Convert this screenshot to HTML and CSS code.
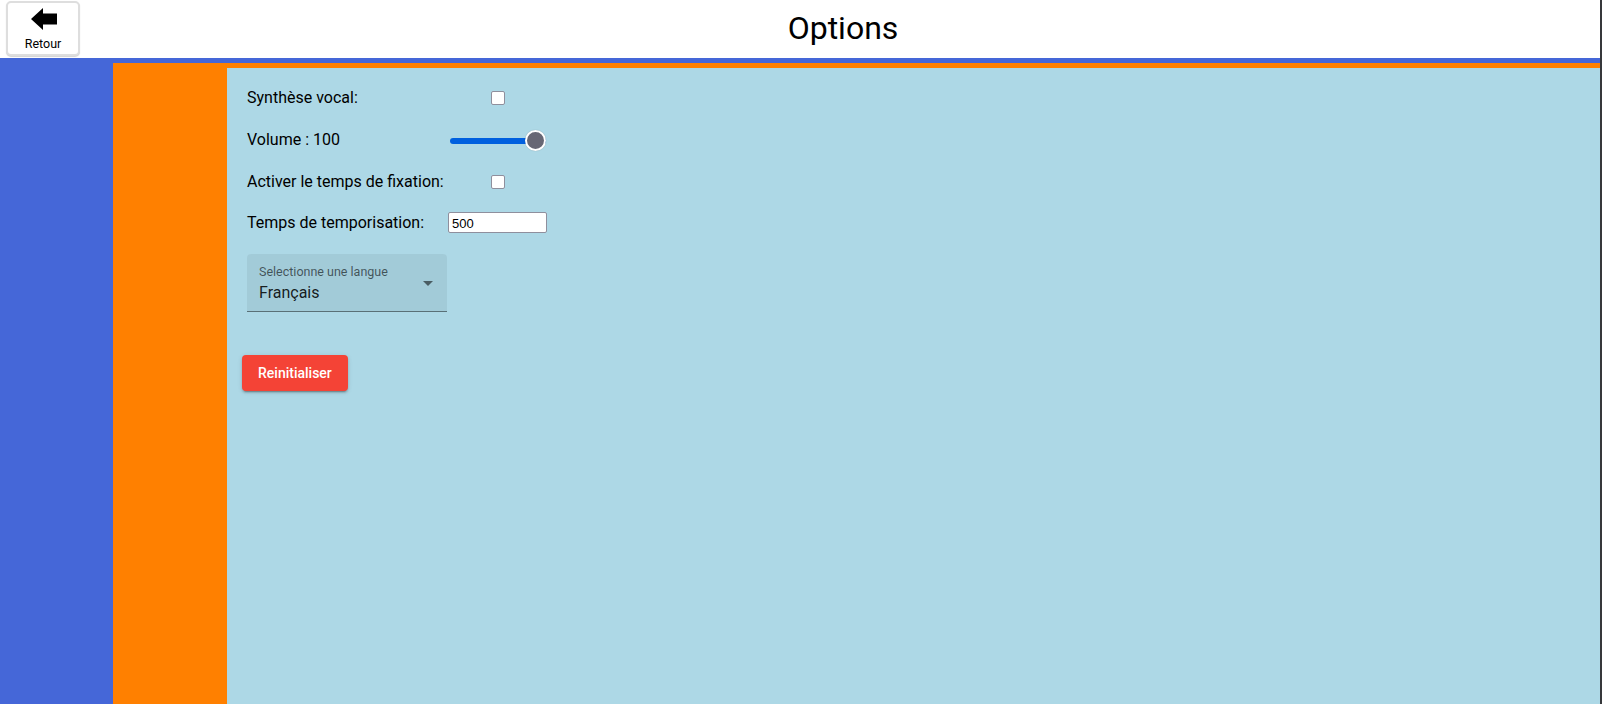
FILE: index.html
```html
<!DOCTYPE html>
<html lang="fr">
<head>
<meta charset="utf-8">
<title>Options</title>
<link rel="stylesheet" href="styles.css">
</head>
<body>
<div class="app">
  <header class="topbar">
    <button class="back-btn" type="button">
      <svg class="back-icon" width="26" height="22" viewBox="0 0 26 22" aria-hidden="true">
        <path d="M0 11 L12 0 V5.5 H26 V16.5 H12 V22 Z" fill="#000"/>
      </svg>
      <span class="back-label">Retour</span>
    </button>
    <h1 class="title">Options</h1>
  </header>
  <main class="outer">
    <div class="middle">
      <section class="content">
        <div class="settings">
          <label class="setting-label" for="tts">Synthèse vocal:</label>
          <div class="setting-control"><input id="tts" class="checkbox" type="checkbox"></div>

          <label class="setting-label" for="vol">Volume : 100</label>
          <div class="setting-control"><input id="vol" class="range" type="range" min="0" max="100" value="100"></div>

          <label class="setting-label" for="fix">Activer le temps de fixation:</label>
          <div class="setting-control"><input id="fix" class="checkbox" type="checkbox"></div>

          <label class="setting-label" for="delay">Temps de temporisation:</label>
          <div class="setting-control"><input id="delay" class="text-input" type="text" value="500"></div>
        </div>

        <div class="select-field">
          <span class="select-label">Selectionne une langue</span>
          <span class="select-value">Français</span>
          <svg class="select-arrow" width="24" height="24" viewBox="0 0 24 24" aria-hidden="true">
            <path d="M7 10l5 5 5-5z" fill="rgba(0,0,0,0.54)"/>
          </svg>
        </div>

        <button class="reset-btn" type="button">Reinitialiser</button>
      </section>
    </div>
  </main>
</div>
</body>
</html>
```

FILE: styles.css
```css
* { box-sizing: border-box; }

html, body {
  margin: 0;
  padding: 0;
  height: 100%;
}

body {
  font-family: Roboto, "Liberation Sans", Arial, sans-serif;
  background: #ffffff;
  border-right: 2px solid #36383b;
  overflow: hidden;
}

.app {
  display: flex;
  flex-direction: column;
  height: 100%;
}

.topbar {
  height: 58px;
  display: flex;
  align-items: flex-start;
  background: #ffffff;
  flex: none;
}

.back-btn {
  margin: 1px 0 0 6px;
  width: 74px;
  height: 55px;
  padding: 0;
  background: #ffffff;
  border: 2px solid #dedede;
  border-radius: 5px;
  box-shadow: 0 1px 1px rgba(0,0,0,0.18);
  display: flex;
  flex-direction: column;
  align-items: center;
  cursor: pointer;
}

.back-icon {
  display: block;
  margin-top: 5px;
  margin-left: 1px;
}

.back-label {
  margin-top: 7px;
  font-family: Roboto, "Liberation Sans", Arial, sans-serif;
  font-size: 12.5px;
  line-height: 14px;
  color: #000;
}

.title {
  flex: 1;
  margin: 0;
  text-align: center;
  font-size: 32px;
  font-weight: 400;
  line-height: 37px;
  padding: 10px 0 0 6px;
  color: #000;
}

.outer {
  flex: 1;
  background: #4567d8;
  padding: 5px 0 0 113px;
  display: flex;
  min-height: 0;
}

.middle {
  flex: 1;
  background: #ff8000;
  padding: 5px 0 0 114px;
  display: flex;
}

.content {
  flex: 1;
  background: #add8e6;
  padding: 8px 0 0 15px;
  display: flex;
  flex-direction: column;
  align-items: flex-start;
}

.settings {
  display: grid;
  grid-template-columns: 201px 99px;
  grid-template-rows: 42px 42px 42px 41px;
  align-items: center;
  padding-left: 5px;
}

.setting-label {
  font-size: 16px;
  line-height: 19px;
  color: #000;
}

.setting-control {
  display: flex;
  justify-content: center;
  align-items: center;
}

.checkbox {
  appearance: none;
  -webkit-appearance: none;
  width: 14px;
  height: 14px;
  margin: 2px 0 0 0;
  background: #fff;
  border: 1px solid #8f8f9d;
  border-radius: 2px;
}

.range {
  -webkit-appearance: none;
  appearance: none;
  width: 96px;
  height: 20px;
  margin: 3px 0 0 1px;
  background: transparent;
  padding: 0;
}

.range::-webkit-slider-runnable-track {
  height: 6px;
  background: #0060df;
  border-radius: 3px;
}

.range::-webkit-slider-thumb {
  -webkit-appearance: none;
  width: 21px;
  height: 21px;
  margin-top: -7.5px;
  border-radius: 50%;
  background: #676774;
  border: 2px solid #ffffff;
  box-shadow: 0 0 1px rgba(0,0,0,0.3);
}

.range::-moz-range-track {
  height: 6px;
  background: #0060df;
  border-radius: 3px;
}

.range::-moz-range-thumb {
  width: 17px;
  height: 17px;
  border-radius: 50%;
  background: #676774;
  border: 2px solid #ffffff;
}

.text-input {
  width: 99px;
  height: 21px;
  margin: 0;
  padding: 1px 3px 0;
  border: 1px solid #8f8f9d;
  border-radius: 2px;
  background: #fff;
  font-family: "Liberation Sans", Arial, sans-serif;
  font-size: 13px;
  color: #000;
}

.select-field {
  position: relative;
  margin: 11px 0 0 5px;
  width: 200px;
  height: 58px;
  background: rgba(0,0,0,0.06);
  border-radius: 4px 4px 0 0;
  border-bottom: 1px solid rgba(0,0,0,0.45);
  padding: 11px 12px 0 12px;
  display: flex;
  flex-direction: column;
}

.select-label {
  font-size: 12.5px;
  line-height: 14px;
  color: rgba(0,0,0,0.6);
}

.select-value {
  margin-top: 2px;
  font-size: 16px;
  line-height: 23px;
  color: rgba(0,0,0,0.87);
}

.select-arrow {
  position: absolute;
  right: 7px;
  top: 17px;
}

.reset-btn {
  margin-top: 43px;
  height: 36px;
  padding: 0 16px;
  border: none;
  border-radius: 4px;
  background: #f44336;
  color: #fff;
  font-family: Roboto, "Liberation Sans", Arial, sans-serif;
  font-size: 14px;
  font-weight: 500;
  box-shadow: 0 3px 1px -2px rgba(0,0,0,0.2), 0 2px 2px 0 rgba(0,0,0,0.14), 0 1px 5px 0 rgba(0,0,0,0.12);
  cursor: pointer;
}
```
